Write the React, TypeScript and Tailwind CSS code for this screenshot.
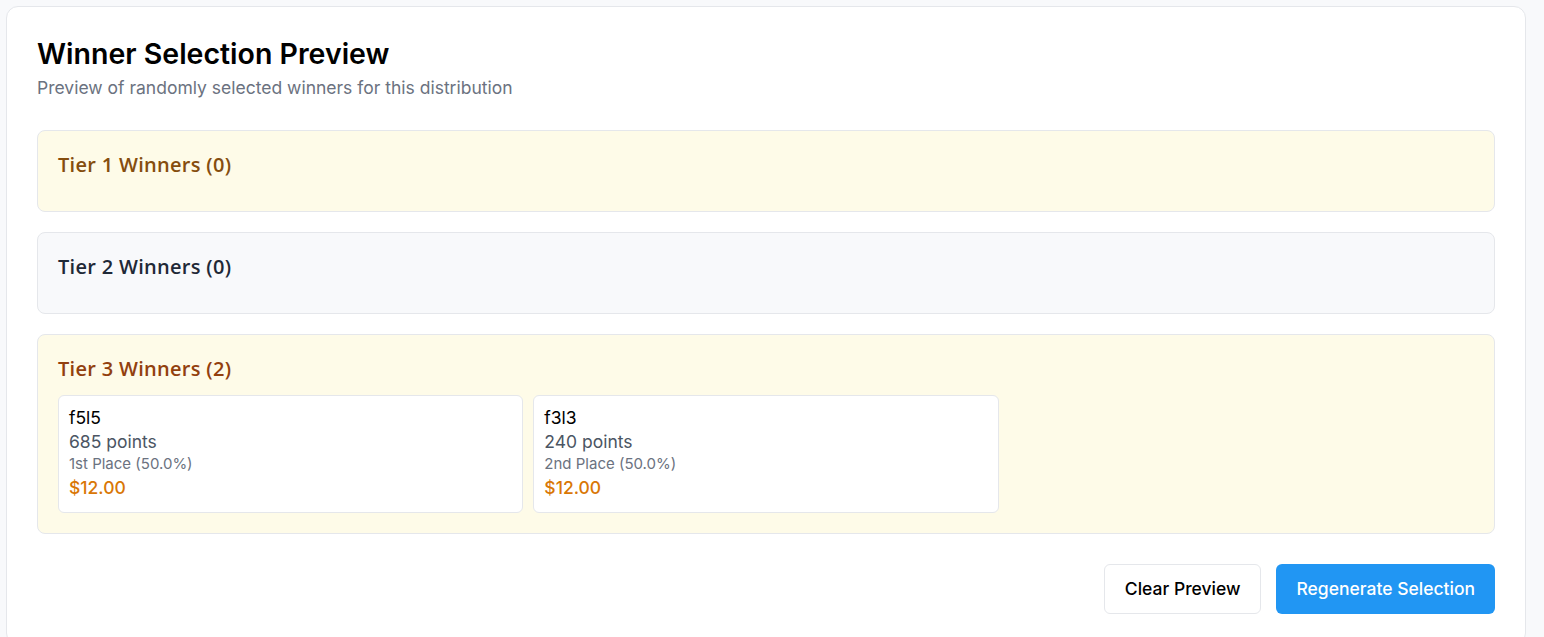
import React from "react";

const inter = { fontFamily: "Inter, 'Noto Sans', sans-serif" };

type Winner = { name: string; points: number; place: string; amount: string };

function WinnerCard({ w }: { w: Winner }) {
  return (
    <div className="rounded-md border border-[#e5e7eb] bg-white px-2.5 pt-2.5 pb-3">
      <div className="text-[17.5px] leading-6 text-black">{w.name}</div>
      <div className="text-[17.5px] leading-6 text-[#4b5563]">{w.points} points</div>
      <div className="text-[15px] leading-5 text-[#6b7280]">{w.place}</div>
      <div className="mt-[2px] text-[17.5px] font-medium leading-6 text-[#d97706]">{w.amount}</div>
    </div>
  );
}

function Tier({
  title,
  bg,
  color,
  winners,
}: {
  title: string;
  bg: string;
  color: string;
  winners: Winner[];
}) {
  return (
    <div className={`rounded-lg border border-[#e5e7eb] p-5 ${bg}`}>
      <h3
        className={`mb-3 text-[20px] font-semibold leading-7 tracking-[0.3px] ${color}`}
        style={{ fontFamily: "'Open Sans', Inter, sans-serif" }}
      >
        {title}
      </h3>
      {winners.length > 0 && (
        <div className="grid grid-cols-3 gap-2.5">
          {winners.map((w) => (
            <WinnerCard key={w.name} w={w} />
          ))}
        </div>
      )}
    </div>
  );
}

export default function App() {
  const tier3: Winner[] = [
    { name: "f5l5", points: 685, place: "1st Place (50.0%)", amount: "$12.00" },
    { name: "f3l3", points: 240, place: "2nd Place (50.0%)", amount: "$12.00" },
  ];
  return (
    <div className="min-h-screen bg-[#f8f9fb] pl-1.5 pt-1.5" style={inter}>
      <div className="w-[1520px] rounded-xl border border-[#e5e7eb] bg-white px-[30px] pt-[30px] pb-[30px]">
        <h2 className="text-[28.5px] font-semibold leading-[34px] text-black">
          Winner Selection Preview
        </h2>
        <p className="mt-[5px] text-[17.5px] leading-6 text-[#6b7280]">
          Preview of randomly selected winners for this distribution
        </p>
        <div className="mt-[30px] flex flex-col gap-5">
          <Tier title="Tier 1 Winners (0)" bg="bg-[#fefbe8]" color="text-[#854d0e]" winners={[]} />
          <Tier title="Tier 2 Winners (0)" bg="bg-[#f8f9fb]" color="text-[#1f2937]" winners={[]} />
          <Tier title="Tier 3 Winners (2)" bg="bg-[#fefbe8]" color="text-[#92400e]" winners={tier3} />
        </div>
        <div className="mt-[30px] flex justify-end gap-[15px]">
          <button className="h-[50px] rounded-md border border-[#e5e7eb] bg-white px-5 text-[17.5px] font-medium text-black">
            Clear Preview
          </button>
          <button className="h-[50px] rounded-md bg-[#2196f3] px-5 text-[17.5px] font-medium text-white">
            Regenerate Selection
          </button>
        </div>
      </div>
    </div>
  );
}
